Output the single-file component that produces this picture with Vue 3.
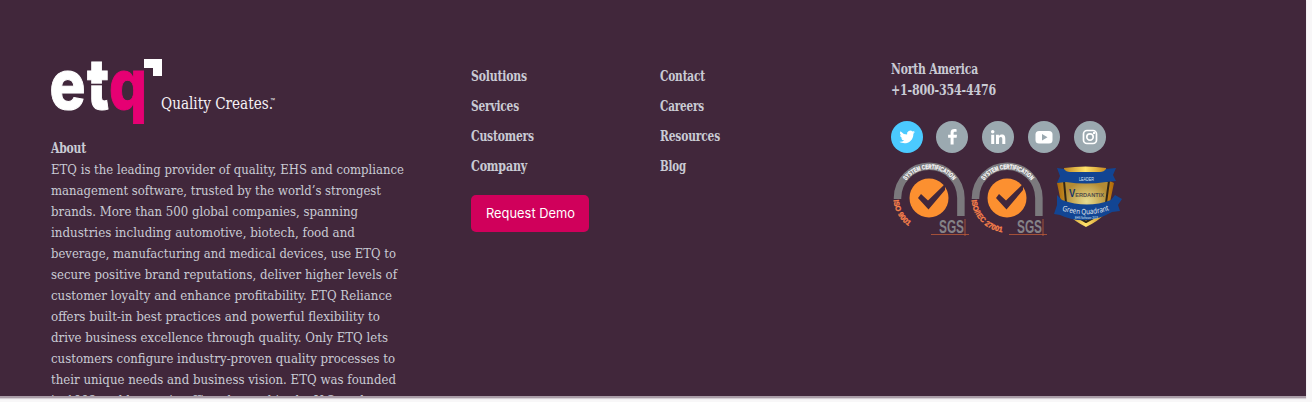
<script setup>
import { h } from 'vue'

// One line of text, fitted to an exact measure
const FitText = ({ text, width }) =>
  h('svg', { width: width + 2, height: 21, style: 'display:block;overflow:visible' }, [
    h('text', { x: 0, y: 15, fill: 'currentColor', textLength: width, lengthAdjust: 'spacingAndGlyphs' }, text),
  ])
FitText.props = ['text', 'width']

const about = [
  ['ETQ is the leading provider of quality, EHS and compliance', 353],
  ['management software, trusted by the world’s strongest', 330],
  ['brands. More than 500 global companies, spanning', 307],
  ['industries including automotive, biotech, food and', 304],
  ['beverage, manufacturing and medical devices, use ETQ to', 345],
  ['secure positive brand reputations, deliver higher levels of', 346],
  ['customer loyalty and enhance profitability. ETQ Reliance', 341],
  ['offers built-in best practices and powerful flexibility to', 329],
  ['drive business excellence through quality. Only ETQ lets', 337],
  ['customers configure industry-proven quality processes to', 344],
  ['their unique needs and business vision. ETQ was founded', 345],
  ['in 1992 and has main offices located in the U.S. and', 313],
]
const primary = [['Solutions', 56], ['Services', 48], ['Customers', 63], ['Company', 56]]
const secondary = [['Contact', 45], ['Careers', 44], ['Resources', 60], ['Blog', 26]]
const seals = [
  { id: 'iso9001', label: 'ISO 9001', len: 31 },
  { id: 'iso27001', label: 'ISO/IEC 27001', len: 48 },
]
</script>

<template>
  <div class="page">
    <footer class="footer">
      <section class="about">
        <svg class="logo" width="230" height="66" viewBox="50 58 230 66">
          <g class="wordmark">
            <text x="49.500" y="108.500" textLength="36" lengthAdjust="spacingAndGlyphs">e</text>
            <text x="87" y="108.500" textLength="22" lengthAdjust="spacingAndGlyphs">t</text>
            <text class="q" x="109" y="108.500" textLength="38" lengthAdjust="spacingAndGlyphs">q</text>
          </g>
          <path d="M87 84.500h22" stroke="#41273b" stroke-width="1.600" />
          <path d="M144 59h18v17h-9v-8h-9z" fill="#fff" />
          <text class="tagline" x="161" y="109" textLength="112" lengthAdjust="spacingAndGlyphs">Quality Creates.</text>
          <text class="tm" x="270" y="102" textLength="5" lengthAdjust="spacingAndGlyphs">™</text>
        </svg>
        <h2 class="strong"><FitText text="About" :width="35" /></h2>
        <div class="copy"><FitText v-for="[t, w] in about" :key="t" :text="t" :width="w" /></div>
      </section>

      <nav class="links">
        <a v-for="[t, w] in primary" :key="t" class="strong"><FitText :text="t" :width="w" /></a>
        <button class="demo"><FitText text="Request Demo" :width="89" /></button>
      </nav>
      <nav class="links">
        <a v-for="[t, w] in secondary" :key="t" class="strong"><FitText :text="t" :width="w" /></a>
      </nav>

      <section class="contact">
        <div class="strong"><FitText text="North America" :width="87" /><FitText text="+1-800-354-4476" :width="105" /></div>
        <div class="social">
          <svg viewBox="0 0 32 32"><circle cx="16" cy="16" r="16" fill="#4bcaff" /><path fill="#fff" d="M24 11.1a7 7 0 0 1-1.8.5 3 3 0 0 0 1.4-1.8 6 6 0 0 1-2 .8 3.2 3.2 0 0 0-5.5 2.9 9 9 0 0 1-6.6-3.3 3.2 3.2 0 0 0 1 4.2 3 3 0 0 1-1.4-.4c0 1.600 1.100 2.900 2.500 3.200a3 3 0 0 1-1.400.1 3.200 3.200 0 0 0 3 2.200A6.500 6.500 0 0 1 8.500 20.800c5.600 3.600 14 .4 13.900-8.100A7 7 0 0 0 24 11.100z" /></svg>
          <svg viewBox="0 0 32 32"><circle cx="16" cy="16" r="16" /><path fill="#fff" d="M14.600 23.500v-6.700h-2.500v-3h2.500v-2.200c0-2.500 1.500-3.500 3.700-3.500.9 0 2 .1 2.300.2v2.500h-1.500c-1.200 0-1.500.6-1.500 1.400v1.600H21l-.4 3h-3v6.700z" /></svg>
          <svg viewBox="0 0 32 32"><circle cx="16" cy="16" r="16" /><path fill="#fff" d="M9.200 13.700h3V23h-3zM14 13.700h2.900V15c.5-.9 1.500-1.500 2.900-1.500 3 0 3.500 2 3.500 4.500v5h-3v-4.600c0-1.100-.1-2.400-1.500-2.400-1.600 0-1.800 1.200-1.800 2.400V23h-3z" /><circle class="dot" cx="10.700" cy="10.800" r="1.750" /></svg>
          <svg viewBox="0 0 32 32"><circle cx="16" cy="16" r="16" /><rect x="7.500" y="10" width="17" height="12.500" rx="3.500" fill="#fff" /><path d="M14 13l5.500 3.200L14 19.500z" /></svg>
          <svg viewBox="0 0 32 32"><circle cx="16" cy="16" r="16" /><g fill="none" stroke="#fff" stroke-width="1.700"><rect x="9.500" y="9.500" width="13" height="13" rx="3.500" /><path d="M19.200 16a3.200 3.200 0 1 1-6.400 0 3.200 3.200 0 0 1 6.400 0z" /></g><path d="M19 12h2" stroke="#fff" stroke-width="1.800" /></svg>
        </div>
        <div class="badges">
          <svg v-for="s in seals" :key="s.id" width="78" height="78" viewBox="0 0 78 78">
            <path d="M6.500 38v-1a31.700 31.700 0 0 1 63.400 0v18" fill="none" stroke="#7b797d" stroke-width="7.500" />
            <circle cx="38" cy="37" r="19.500" fill="#fc9030" />
            <path d="M27 37l3-4 7 6.500 17-16.500v6L37.500 48.500z" fill="#41273b" />
            <path :id="s.id + '-top'" d="M8.500 38a30 30 0 0 1 60 0" fill="none" />
            <text class="seal-top"><textPath :href="'#' + s.id + '-top'" startOffset="20" textLength="54" lengthAdjust="spacingAndGlyphs">SYSTEM CERTIFICATION</textPath></text>
            <path :id="s.id + '-side'" d="M2.500 39a35.500 35.500 0 0 0 34 32.500" fill="none" />
            <text class="seal-side"><textPath :href="'#' + s.id + '-side'" startOffset="0" :textLength="s.len" lengthAdjust="spacingAndGlyphs">{{ s.label }}</textPath></text>
            <text class="sgs" x="48" y="72" textLength="25" lengthAdjust="spacingAndGlyphs">SGS</text>
            <path d="M40 73.500h38M74 58v17" stroke="#bd5a38" stroke-width=".8" />
          </svg>
          <svg class="shield" width="76" height="78" viewBox="1048 161 76 78">
            <defs>
              <linearGradient id="gold" x2="1" y2="0"><stop stop-color="#a96709" /><stop offset=".5" stop-color="#ffe26a" /><stop offset="1" stop-color="#af6605" /></linearGradient>
              <radialGradient id="plate"><stop stop-color="#e6dc91" /><stop offset="1" stop-color="#b38b34" /></radialGradient>
            </defs>
            <path d="M1064 168q22-3 42 0l1 10q3 4 7 5l-4 19q-1 14-24 25-22-11-25-25l-4-19q6-2 7-6z" fill="url(#gold)" />
            <path d="M1064 181h45l-3 22q-5 12-20 19-16-8-20-19z" fill="url(#plate)" stroke="#302615" stroke-width="2" />
            <path d="M1057 168l7 1q2 3 6 3h30q4 0 6-3l10-1-3 7 3 6-10 1q-20 3-40 0l-9 1 3-7z" fill="#124593" />
            <path d="M1057 195l5 5q25 9 49 0l4-5 7 4-4 6 2 6-8 1q-26 15-52 3l-6-1 3-9z" fill="#124593" />
            <text class="leader" x="1079" y="181" textLength="15" lengthAdjust="spacingAndGlyphs">LEADER</text>
            <text class="brand" x="1069" y="197" textLength="35" lengthAdjust="spacingAndGlyphs"><tspan class="v">V</tspan>ERDANTIX</text>
            <path id="ribbon" d="M1062 210.500q25 8 49-1" fill="none" />
            <text class="quadrant"><textPath href="#ribbon" textLength="48" lengthAdjust="spacingAndGlyphs">Green Quadrant</textPath></text>
            <text class="leader small" x="1075" y="218.500" textLength="23" lengthAdjust="spacingAndGlyphs">EHS Software 2019</text>
          </svg>
        </div>
      </section>
    </footer>
  </div>
</template>

<style>
body { margin: 0; background: #f7f6f7; overflow: hidden; }
</style>

<style scoped>
.page { width: 1312px; height: 402px; overflow: hidden; background: #f8f7f8; box-sizing: border-box; padding-right: 6px; }
.footer {
  display: grid;
  grid-template-columns: 420px 189px 231px 1fr;
  box-sizing: border-box;
  height: 398px;
  padding: 58px 0 0 50.5px;
  overflow: hidden;
  background: #41273b;
  color: #c9cbd4;
  border-bottom: 2px solid #a99ca7;
  box-shadow: 0 1px 1px #d5cfd4;
  font: 13.5px "DejaVu Serif Condensed", "DejaVu Serif", serif;
}
.logo { display: block; margin-left: -.5px; }
.wordmark { font: 800 69px Inter, sans-serif; fill: #fff; stroke: #fff; stroke-width: 1; }
.wordmark .q { fill: #e60073; stroke: #e60073; }
.tagline { font: 16.500px "DejaVu Serif Condensed", "DejaVu Serif", serif; fill: #f5f1f5; }
.tm { font: 6px "Liberation Sans", sans-serif; fill: #fff; }
.strong { font-weight: 700; font-size: 14px; letter-spacing: -.2px; }
h2 { margin: 14px 0 0; }
.copy { font-size: 13.5px; }
.links { display: flex; flex-direction: column; gap: 9px; padding-top: 8px; align-items: flex-start; }
.demo {
  display: flex; align-items: center; justify-content: center;
  width: 118px; height: 37px; margin: 9px 0 0 .5px; padding: 0 0 0 2px; border: 0; border-radius: 5px;
  background: #d0005b; color: #fff; font: 13.5px Inter, sans-serif;
}
.contact { padding-top: 1px; }
.social { display: flex; gap: 13.75px; margin-top: 20px; }
.social svg { width: 32px; height: 32px; fill: #9ba9b0; }
.social .dot { fill: #fff; }
.badges { display: flex; margin-top: 8px; }
.badges svg { display: block; flex: none; }
.shield { margin-left: 1px; }
.seal-top { font: 700 6.500px "Liberation Sans", sans-serif; fill: #fff; stroke: #fff; stroke-width: .2; }
.seal-side { font: 700 7.500px "Liberation Sans", sans-serif; fill: #fa824b; stroke: #fa824b; stroke-width: .3; }
.sgs { font: 700 18px "Liberation Sans", sans-serif; fill: #858287; }
.leader { font: 4.500px "Liberation Sans", sans-serif; fill: #dce8f5; }
.small { font-size: 3.500px; }
.brand { font: 700 6px "Liberation Sans", sans-serif; fill: #514c48; }
.v { font-size: 10px; fill: #18366a; }
.quadrant { font: 7.500px "Open Sans", sans-serif; fill: #eef2f5; }
</style>
